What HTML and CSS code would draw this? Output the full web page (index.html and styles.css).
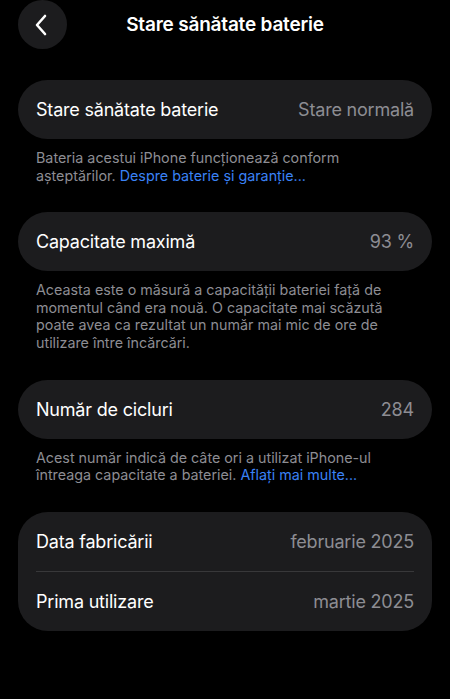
FILE: index.html
```html
<!DOCTYPE html>
<html lang="ro">
<head>
    <meta charset="UTF-8">
    <meta name="viewport" content="width=device-width, initial-scale=1.0">
    <title>Stare sănătate baterie</title>
    <link rel="stylesheet" href="styles.css">
</head>
<body>
    <!-- Bara de sus -->
    <div class="topbar">
        <button class="back-btn" aria-label="Înapoi">
            <svg width="14" height="24" viewBox="0 0 14 24">
                <path d="M11 3 L3 12 L11 21" fill="none" stroke="#fff" stroke-width="2.6" stroke-linecap="round" stroke-linejoin="round"/>
            </svg>
        </button>
        <h1 class="title">Stare sănătate baterie</h1>
    </div>

    <!-- Starea bateriei -->
    <div class="card">
        <div class="row">
            <span class="label">Stare sănătate baterie</span>
            <span class="value">Stare normală</span>
        </div>
    </div>
    <p class="note">Bateria acestui iPhone funcționează conform așteptărilor. <a href="#">Despre baterie și garanție...</a></p>

    <!-- Capacitate -->
    <div class="card">
        <div class="row">
            <span class="label">Capacitate maximă</span>
            <span class="value">93 %</span>
        </div>
    </div>
    <p class="note">Aceasta este o măsură a capacității bateriei față de momentul când era nouă. O capacitate mai scăzută poate avea ca rezultat un număr mai mic de ore de utilizare între încărcări.</p>

    <!-- Cicluri -->
    <div class="card">
        <div class="row">
            <span class="label">Număr de cicluri</span>
            <span class="value">284</span>
        </div>
    </div>
    <p class="note">Acest număr indică de câte ori a utilizat iPhone-ul întreaga capacitate a bateriei. <a href="#">Aflați mai multe...</a></p>

    <!-- Date -->
    <div class="card card-dates">
        <div class="row">
            <span class="label">Data fabricării</span>
            <span class="value">februarie 2025</span>
        </div>
        <div class="row">
            <span class="label">Prima utilizare</span>
            <span class="value">martie 2025</span>
        </div>
    </div>
</body>
</html>
```
FILE: styles.css
```css
body {
    margin: 0;
    background-color: #000;
    color: #fff;
    font-family: Inter, "Noto Sans", sans-serif;
    padding: 0 18px;
}
.topbar {
    display: flex;
    align-items: center;
    height: 49px;
    margin-bottom: 31px;
}
.back-btn {
    width: 49px;
    height: 49px;
    border-radius: 50%;
    border: none;
    background-color: #1c1c1e;
    display: flex;
    align-items: center;
    justify-content: center;
    padding: 0 3px 0 0;
    flex-shrink: 0;
}
.title {
    flex: 1;
    margin: 0 49px 0 0;
    text-align: center;
    font-size: 19px;
    font-weight: 600;
    letter-spacing: -0.2px;
}
.card {
    background-color: #1c1c1e;
    border-radius: 30px;
    padding: 0 18px;
}
.row {
    display: flex;
    justify-content: space-between;
    align-items: center;
    height: 59px;
    font-size: 18px;
    letter-spacing: -0.2px;
}
.label {
    color: #fff;
}
.value {
    color: #8d8d93;
}
.card-dates .row + .row {
    border-top: 1px solid #38383a;
}
.note {
    margin: 10px 0 28px;
    padding: 0 18px;
    font-size: 14.3px;
    line-height: 17.6px;
    color: #8d8d93;
}
.note a {
    color: #3a82f6;
    text-decoration: none;
}
```
